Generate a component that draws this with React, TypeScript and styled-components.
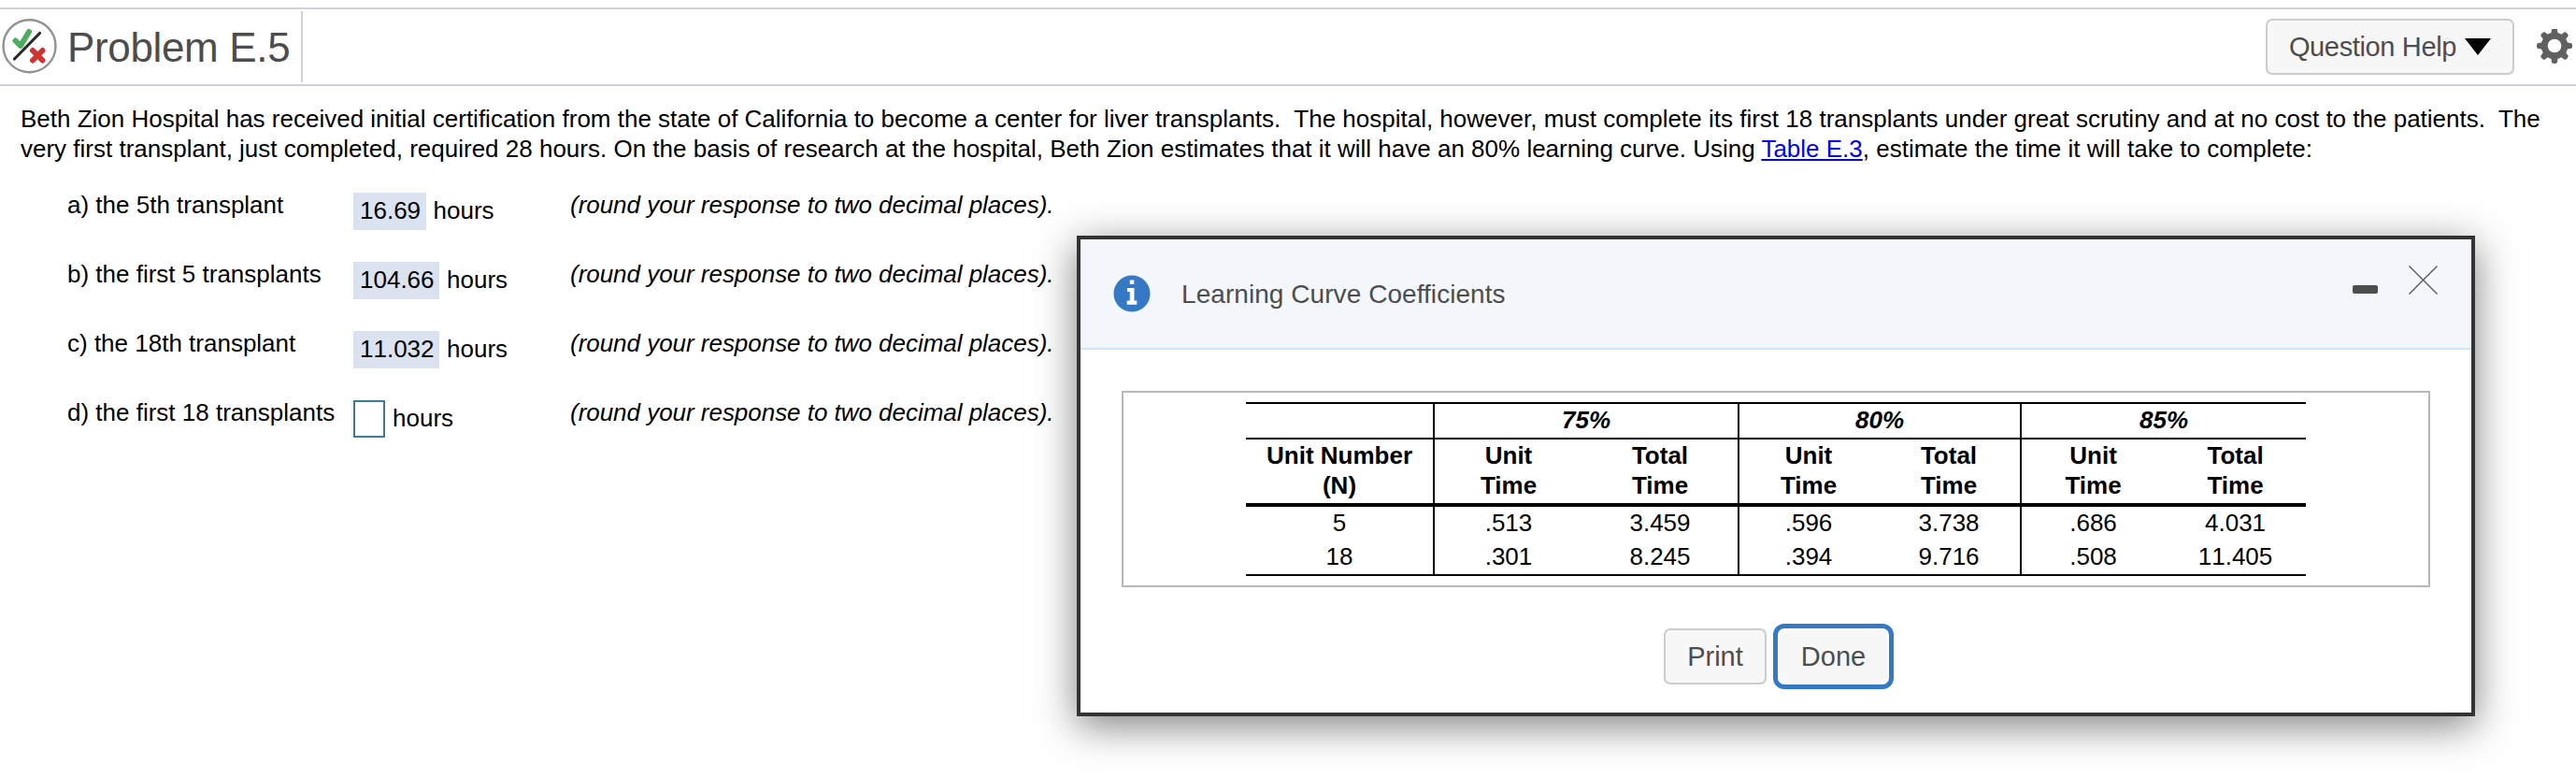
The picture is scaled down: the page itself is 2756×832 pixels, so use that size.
import React from "react";
import styled, { createGlobalStyle } from "styled-components";

const Global = createGlobalStyle`
  body { margin: 0; background: #fff; }
  *, *::before, *::after { box-sizing: border-box; }
`;

const Page = styled.div`
  position: relative;
  width: 2756px;
  height: 832px;
  overflow: hidden;
  padding-top: 8px;
  font-family: "Liberation Sans", Arial, sans-serif;
  font-size: 26px;
  line-height: 32px;
  color: #000;
`;

const Header = styled.header`
  display: flex;
  align-items: center;
  justify-content: space-between;
  height: 84px;
  border-top: 2px solid #cdd1dc;
  border-bottom: 2px solid #cdd1dc;
  padding: 0 4px 0 2px;
`;

const TitleGroup = styled.div`
  display: flex;
  align-items: center;
  gap: 11px;
  width: 322px;
  height: 76px;
  border-right: 2px solid #cdd1dc;
`;

const Title = styled.h1`
  margin: 0;
  padding-top: 2px;
  font-size: 44px;
  line-height: 48px;
  font-weight: 400;
  letter-spacing: -0.35px;
  color: #4d4d4d;
  white-space: nowrap;
`;

const Tools = styled.div`
  display: flex;
  align-items: center;
  gap: 24px;
`;

const Button = styled.button<{ $width: number; $focused?: boolean; $spacing?: number }>`
  display: flex;
  align-items: center;
  justify-content: center;
  gap: 9px;
  width: ${(p) => p.$width}px;
  height: 60px;
  padding: 0;
  border: 2px solid ${(p) => (p.$focused ? "#fff" : "#ccc")};
  border-radius: 7px;
  background: #f7f7f7;
  box-shadow: ${(p) => (p.$focused ? "0 0 0 5px #3478c6" : "none")};
  font-family: inherit;
  font-size: 29px;
  line-height: 36px;
  letter-spacing: ${(p) => p.$spacing ?? 0}px;
  color: #4d4d4d;
  white-space: nowrap;
`;

const Prompt = styled.p`
  margin: 0;
  padding: 19px 0 0 22px;
  height: 102px;
  white-space: pre;
`;

const PromptLine = styled.span`
  display: block;
`;

const Link = styled.a`
  color: #0000ee;
  text-decoration: underline;
`;

const Questions = styled.div`
  display: grid;
  grid-template-columns: 306px 232px 530px;
  grid-auto-rows: 74px;
  padding-left: 72px;
  white-space: nowrap;
`;

const Label = styled.div`
  padding-top: 9px;
`;

const Note = styled.div`
  padding-top: 9px;
  font-style: italic;
  letter-spacing: -0.03px;
`;

const Response = styled.div`
  display: flex;
  align-items: flex-start;
  gap: 8px;
  padding-top: 12px;
  line-height: 38px;
`;

const Value = styled.span`
  padding: 0 5.5px 2px 7px;
  height: 40px;
  background: #dbe2f0;
  font-kerning: none;
`;

const Blank = styled.span`
  width: 34px;
  height: 40px;
  border: 2px solid #377d9c;
`;

const Dialog = styled.section`
  position: absolute;
  left: 1152px;
  top: 252px;
  width: 1496px;
  height: 514px;
  border: 4px solid #333;
  background: #fff;
  box-shadow: 0 10px 40px rgba(0, 0, 0, 0.5);
`;

const DialogHeader = styled.div`
  display: flex;
  justify-content: space-between;
  height: 118px;
  padding: 0 36px 0 35px;
  border-bottom: 2px solid #d0e5f7;
  background: #f3f6fb;
`;

const DialogTitle = styled.div`
  display: flex;
  align-items: center;
  gap: 33px;
  font-size: 28px;
  letter-spacing: 0.06px;
  color: #4d4d4d;
`;

const DialogName = styled.span`
  padding-top: 2px;
`;

const DialogControls = styled.div`
  display: flex;
  align-items: flex-start;
  gap: 33px;
  padding-top: 28px;
`;

const Minimize = styled.span`
  width: 27px;
  height: 9px;
  margin-top: 21px;
  border-radius: 2px;
  background: #4d4d4d;
`;

const TableFrame = styled.div`
  width: 1400px;
  height: 210px;
  margin: 44px 0 0 44px;
  padding: 10px 0 0 131px;
  border: 2px solid #b8b8b8;
`;

const Table = styled.table`
  width: 1134px;
  table-layout: fixed;
  border-spacing: 0;
  border-collapse: separate;
  border-top: 2px solid #000;
  border-bottom: 2px solid #000;
  text-align: center;
`;

const Cell = styled.td<{ $rule?: boolean }>`
  height: 36px;
  padding: 1px 0 0;
  line-height: 32px;
  vertical-align: top;
  border-left: ${(p) => (p.$rule ? "2px solid #000" : "none")};
  font-kerning: none;
`;

const RateCell = styled(Cell)`
  height: 38px;
  border-bottom: 2px solid #000;
  font-weight: 700;
  font-style: italic;
`;

const HeadCell = styled(Cell)`
  height: 72px;
  border-bottom: 4px solid #000;
  font-weight: 700;
  font-kerning: auto;
`;

const Actions = styled.div`
  display: flex;
  gap: 12px;
  padding: 44px 0 0 624px;
`;

const GradeIcon = () => (
  <svg width="59" height="60" viewBox="0 0 59 60" fill="none">
    <circle cx="29.500" cy="29.200" r="28" stroke="#929292" strokeWidth="2.400" />
    <path d="M14.500 23.500l5.500 5.500L29 14" stroke="#4cae5c" strokeWidth="6" strokeLinecap="round" strokeLinejoin="round" />
    <path d="M40.500 15.500L13.500 43" stroke="#2b2b2b" strokeWidth="3.200" strokeLinecap="round" />
    <path d="M33 34l10.500 10.500M43.500 34L33 44.500" stroke="#cf3530" strokeWidth="6" strokeLinecap="round" />
  </svg>
);

const GearIcon = () => (
  <svg width="38" height="38" viewBox="-19 -18 38 38">
    {[0, 45, 90, 135, 180, 225, 270, 315].map((a) => (
      <path key={a} d="M-4-11L-2.800-18.300Q0-19.800 2.800-18.300L4-11z" fill="#606060" transform={`rotate(${a})`} />
    ))}
    <circle r="10.800" fill="none" stroke="#606060" strokeWidth="7" />
  </svg>
);

const InfoIcon = () => (
  <svg width="40" height="40" viewBox="0 0 40 40">
    <circle cx="20" cy="20" r="19.500" fill="#3478c6" />
    <path d="M17.800 5.500h4.500v4.500h-4.500zM15 14h7.500v13.500h2.800v4.200H14.700v-4.200h3.100V18H15z" fill="#fff" />
  </svg>
);

const CloseIcon = () => (
  <svg width="31" height="31" viewBox="0 0 31 31">
    <path d="M.5 .5l30 30M30.500 .5l-30 30" stroke="#555" strokeWidth="1.300" />
  </svg>
);

const CaretIcon = () => (
  <svg width="28" height="18" viewBox="0 0 28 18">
    <path d="M0 0h28L14 18z" fill="#000" />
  </svg>
);

const questions = [
  { label: "a) the 5th transplant", value: "16.69" },
  { label: "b) the first 5 transplants", value: "104.66" },
  { label: "c) the 18th transplant", value: "11.032" },
  { label: "d) the first 18 transplants", value: "" },
];

const columnWidths = [200, 160, 166, 150, 152, 155, 151];
const rates = ["75%", "80%", "85%"];
const rows = [
  ["5", ".513", "3.459", ".596", "3.738", ".686", "4.031"],
  ["18", ".301", "8.245", ".394", "9.716", ".508", "11.405"],
];

export default function App() {
  return (
    <Page>
      <Global />
      <Header>
        <TitleGroup>
          <GradeIcon />
          <Title>Problem E.5</Title>
        </TitleGroup>
        <Tools>
          <Button $width={266} $spacing={-0.35}>
            Question Help <CaretIcon />
          </Button>
          <GearIcon />
        </Tools>
      </Header>
      <Prompt>
        <PromptLine>
          {"Beth Zion Hospital has received initial certification from the state of California to become a center for liver transplants.  The hospital, however, must complete its first 18 transplants under great scrutiny and at no cost to the patients.  The"}
        </PromptLine>
        <PromptLine>
          {"very first transplant, just completed, required 28 hours. On the basis of research at the hospital, Beth Zion estimates that it will have an 80% learning curve. Using "}
          <Link>Table E.3</Link>
          {", estimate the time it will take to complete:"}
        </PromptLine>
      </Prompt>
      <Questions>
        {questions.map((q) => (
          <React.Fragment key={q.label}>
            <Label>{q.label}</Label>
            <Response>
              {q.value ? <Value>{q.value}</Value> : <Blank />}
              <span>hours</span>
            </Response>
            <Note>(round your response to two decimal places).</Note>
          </React.Fragment>
        ))}
      </Questions>
      <Dialog>
        <DialogHeader>
          <DialogTitle>
            <InfoIcon />
            <DialogName>Learning Curve Coefficients</DialogName>
          </DialogTitle>
          <DialogControls>
            <Minimize />
            <CloseIcon />
          </DialogControls>
        </DialogHeader>
        <TableFrame>
          <Table>
            <colgroup>
              {columnWidths.map((w, i) => (
                <col key={i} width={w} />
              ))}
            </colgroup>
            <thead>
              <tr>
                <RateCell />
                {rates.map((r) => (
                  <RateCell key={r} colSpan={2} $rule>
                    {r}
                  </RateCell>
                ))}
              </tr>
              <tr>
                <HeadCell>
                  Unit Number
                  <br />
                  (N)
                </HeadCell>
                {rates.map((r) => (
                  <React.Fragment key={r}>
                    <HeadCell $rule>
                      Unit
                      <br />
                      Time
                    </HeadCell>
                    <HeadCell>
                      Total
                      <br />
                      Time
                    </HeadCell>
                  </React.Fragment>
                ))}
              </tr>
            </thead>
            <tbody>
              {rows.map((row) => (
                <tr key={row[0]}>
                  {row.map((v, i) => (
                    <Cell key={i} $rule={i % 2 === 1}>
                      {v}
                    </Cell>
                  ))}
                </tr>
              ))}
            </tbody>
          </Table>
        </TableFrame>
        <Actions>
          <Button $width={110}>Print</Button>
          <Button $width={119} $focused>
            Done
          </Button>
        </Actions>
      </Dialog>
    </Page>
  );
}
